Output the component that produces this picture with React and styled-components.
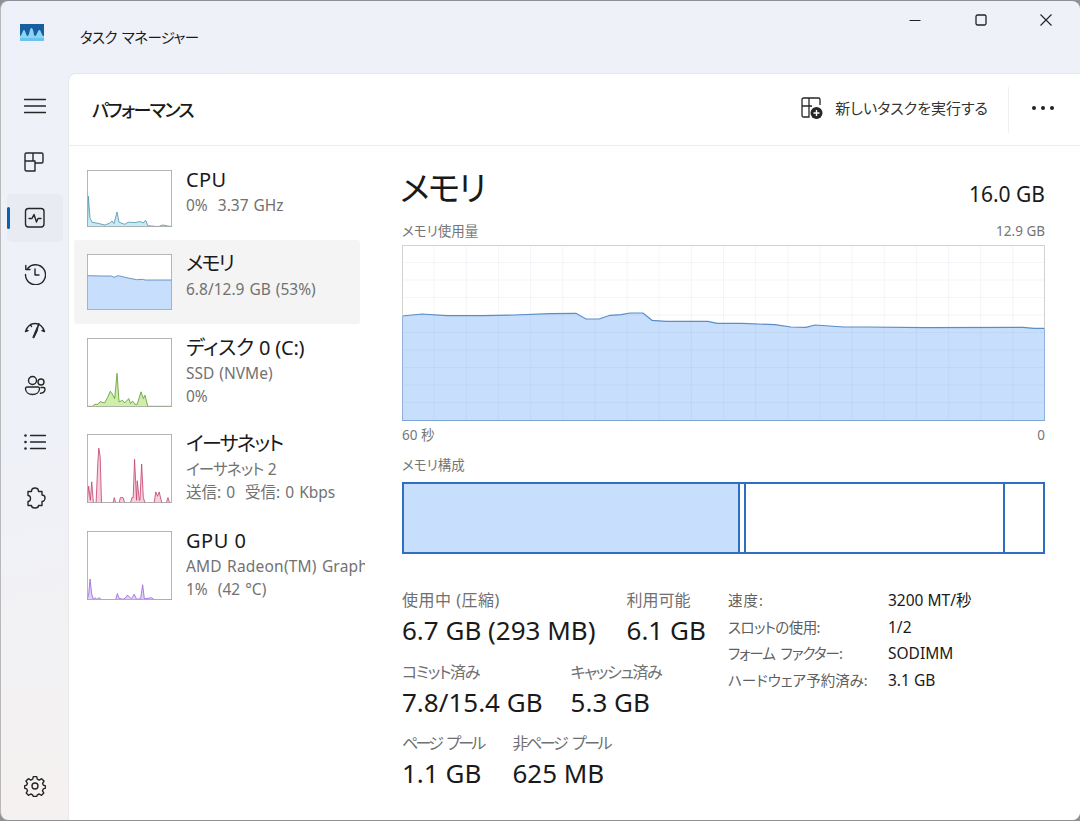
import React from "react";
import styled, { createGlobalStyle } from "styled-components";

const Global = createGlobalStyle`
  html, body { margin: 0; padding: 0; width: 1080px; height: 821px; overflow: hidden; background: #8f9196; }
  #root { width: 1080px; height: 821px; }
  * { box-sizing: border-box; }
`;

const Window = styled.div`
  width: 1080px; height: 819px;
  margin-top: 1px;
  border-left: 1px solid #b9b9bb;
  border-radius: 8px;
  overflow: hidden;
  display: flex; flex-direction: column;
  background: linear-gradient(170deg, #eef1f9 0%, #eff1f8 45%, #f8f1ec 100%);
  font-family: "Noto Sans", "Noto Sans CJK JP", sans-serif;
  font-feature-settings: "palt";
  color: #1a1a1a;
`;
const TitleBar = styled.div`
  height: 72px; flex: none;
  display: flex; align-items: flex-start;
  padding-left: 19px;
`;
const Logo = styled.svg`
  width: 24px; height: 17px; margin-top: 23px; flex: none;
`;
const AppName = styled.div`
  margin: 25px 0 0 36px;
  font-size: 14.5px; line-height: 22px; letter-spacing: -0.65px; word-spacing: 2px;
`;
const Controls = styled.div`
  margin-left: auto; display: flex; padding-right: 1px;
`;
const ControlBtn = styled.div`
  width: 65.5px; height: 38px; display: flex; align-items: center; justify-content: center;
`;
const Body = styled.div`
  flex: 1; display: flex; min-height: 0;
`;
const Nav = styled.nav`
  width: 67px; flex: none; display: flex; flex-direction: column;
  padding: 9px 0 10px 6px; gap: 8px;
`;
const NavItem = styled.div`
  position: relative;
  width: 56px; height: 48px; flex: none; border-radius: 5px;
  display: flex; align-items: center; justify-content: center;
  background: ${p => (p.$active ? "#e9ebf2" : "transparent")};
  ${p => p.$bottom && "margin-top: auto;"}
`;
const Indicator = styled.span`
  position: absolute; left: 0; top: 13px; width: 3px; height: 22px;
  border-radius: 2px; background: #0b62ab;
`;
const Main = styled.main`
  flex: 1; min-width: 0; display: flex; flex-direction: column;
  background: #fff;
  border-top-left-radius: 8px;
  border-top: 1px solid #e6e7ea;
  border-left: 1px solid #e9e9ea;
`;
const Header = styled.header`
  height: 72px; flex: none; display: flex; align-items: center;
  border-bottom: 1px solid #ececec;
  padding-left: 23px;
`;
const PageTitle = styled.h1`
  margin: 1px 0 0; font-size: 18px; font-weight: 500; line-height: 24px; letter-spacing: -1.5px;
`;
const NewTask = styled.div`
  margin-left: auto; display: flex; align-items: center; gap: 12px;
  font-size: 15px; color: #333; padding: 0 20px 4px 0;
`;
const Separator = styled.div`
  width: 1px; height: 46px; background: #f0f0f0;
`;
const More = styled.div`
  width: 71px; display: flex; justify-content: center; align-items: center;
  padding: 0 4px 4px 0;
`;
const Content = styled.div`
  flex: 1; display: flex; min-height: 0;
`;
const Side = styled.aside`
  width: 296px; flex: none; overflow: hidden; padding: 10px 5px 0 5px;
`;
const Row = styled.div`
  height: ${p => p.$h}px; display: flex; gap: 14px; padding: 14px 0 0 13px; border-radius: 3px;
  white-space: nowrap;
  background: ${p => (p.$active ? "#f4f4f4" : "transparent")};
`;
const Thumb = styled.svg`
  width: 85px; height: ${p => p.$h}px; flex: none; display: block;
`;
const RowText = styled.div`
  margin-top: -4px;
`;
const RowTitle = styled.div`
  font-size: 20px; line-height: 28px; color: #1a1a1a;
  letter-spacing: ${p => p.$track || 0}px;
`;
const RowSub = styled.div`
  font-size: 15.5px; line-height: 23px; color: #727272;
  letter-spacing: ${p => p.$track || 0}px;
  word-spacing: 1px;
  &:first-of-type { margin-top: 1px; }
`;
const Detail = styled.section`
  flex: 1; min-width: 0; padding: 17px 35px 0 37px; display: flex; flex-direction: column;
`;
const DetailHead = styled.div`
  display: flex; justify-content: space-between; align-items: flex-end; height: 50px;
`;
const BigTitle = styled.h2`
  margin: 0 0 0 -2px; font-size: 34px; font-weight: 400; line-height: 50px; letter-spacing: -1.8px;
`;
const Total = styled.div`
  font-size: 21px; line-height: 28px; margin-bottom: 5px;
`;
const Caption = styled.div`
  display: flex; justify-content: space-between;
  font-size: 13.5px; line-height: 20px; color: #767676;
`;
const ChartCaption = styled(Caption)`
  margin-top: 8px; margin-bottom: 4px;
`;
const AxisCaption = styled(Caption)`
  margin-top: 4px;
`;
const BarCaption = styled(Caption)`
  margin-top: 10px; margin-bottom: 7px;
`;
const Chart = styled.svg`
  width: 643px; height: 176px; display: block; flex: none;
`;
const Bar = styled.div`
  width: 643px; height: 72px; flex: none; display: flex;
  border: 2px solid #2e6fc2;
`;
const Seg = styled.div`
  width: ${p => p.$w}px; flex: ${p => (p.$grow ? 1 : "none")};
  background: ${p => (p.$fill ? "#c7defc" : "#fff")};
  ${p => p.$line && "border-right: 2px solid #2e6fc2;"}
`;
const Stats = styled.div`
  display: flex; margin-top: 35px;
`;
const StatsLeft = styled.div`
  width: 326px; flex: none; display: flex; flex-direction: column; gap: 12.5px;
`;
const StatRow = styled.div`
  display: flex; gap: ${p => p.$gap}px;
`;
const Stat = styled.div``;
const StatLabel = styled.div`
  font-size: 16px; line-height: 22px; color: #707070; white-space: nowrap;
  letter-spacing: ${p => p.$track || 0}px;
  word-spacing: ${p => p.$word || 0}px;
`;
const StatValue = styled.div`
  font-size: 26px; line-height: 36px; color: #1a1a1a; margin-top: 1px; white-space: nowrap;
`;
const Facts = styled.dl`
  margin: 0; display: grid; grid-template-columns: 160px auto; grid-auto-rows: 26.6px;
  align-content: start; line-height: 22px;
`;
const FactKey = styled.dt`
  color: #5f5f5f; font-size: 14.5px; white-space: nowrap;
  letter-spacing: ${p => p.$track || 0}px;
  word-spacing: ${p => p.$word || 0}px;
`;
const FactVal = styled.dd`
  margin: 0; color: #1a1a1a; font-size: 15.5px;
`;

const Ic = ({ children }) => (
  <svg width={22} height={22} viewBox="0 0 22 22" fill="none" stroke="#262626" strokeWidth="1.4" strokeLinecap="round" strokeLinejoin="round">
    {children}
  </svg>
);

const line = pts => pts.map(p => p.join(",")).join(" ");

function Spark({ box, pts, stroke, fill, h }) {
  const [x, y, w, ht] = box;
  const closed = [[x, y + ht], ...pts, [x + w, y + ht]];
  return (
    <Thumb $h={h} viewBox={`${x} ${y} ${w} ${ht}`} preserveAspectRatio="none">
      <rect x={x} y={y} width={w} height={ht} fill="#fff" />
      <polygon points={line(closed)} fill={fill} />
      <polyline points={line(pts)} fill="none" stroke={stroke} strokeWidth="2.4" />
      <rect x={x + 1} y={y + 1} width={w - 2} height={ht - 2} fill="none" stroke="#a9a9a9" strokeWidth="3" />
    </Thumb>
  );
}

const cpu = [[24,195],[27,105],[32,170],[38,182],[55,185],[75,190],[90,185],[97,178],[103,186],[112,152],[118,182],[135,188],[145,182],[165,183],[180,180],[190,184],[197,176],[203,192],[235,195],[248,190],[262,193],[275,195]];
const mem = [[23,348],[70,349],[95,349],[103,353],[115,348],[145,355],[170,360],[190,359],[195,361],[275,361]];
const disk = [[23,228],[40,228],[45,222],[55,222],[62,214],[75,218],[85,200],[92,183],[100,195],[105,205],[112,130],[118,215],[128,210],[135,218],[147,205],[152,220],[158,212],[165,222],[172,222],[183,185],[190,205],[195,195],[203,228],[275,228]];
const eth = [[23,518],[28,468],[33,510],[37,455],[42,518],[50,518],[55,400],[58,355],[62,380],[66,518],[100,518],[104,502],[108,518],[118,518],[122,502],[130,502],[135,518],[152,518],[156,502],[160,502],[164,388],[170,510],[172,452],[178,510],[180,510],[185,402],[190,502],[195,518],[222,518],[227,485],[232,498],[237,485],[245,518],[258,518],[263,502],[268,518],[275,518]];
const gpu = [[23,807],[28,790],[32,745],[37,790],[42,805],[47,800],[52,805],[60,800],[65,807],[108,807],[113,788],[118,802],[130,805],[138,800],[143,792],[150,800],[155,803],[163,790],[170,805],[182,803],[188,762],[193,803],[205,802],[213,800],[225,807],[275,807]];

const memMain = [[402,316],[422,314],[447,315.7],[483,315.7],[514,315],[550,313.7],[576,313.3],[586,319],[599,319],[610,315.3],[621,314.7],[630,313],[643,313],[652,320.3],[666,321.3],[708,321.3],[717,323.3],[742,323.3],[775,324.7],[791,327],[806,327.3],[815,325],[844,327],[867,327],[925,327.7],[1023,327.3],[1034,328.3],[1045,328.3]];

function MainChart() {
  const pts = memMain.map(([x, y]) => [x - 402, y - 245]);
  const v = Array.from({ length: 19 }, (_, i) => ((i + 1) * 643) / 20);
  const h = Array.from({ length: 9 }, (_, i) => ((i + 1) * 175) / 10);
  return (
    <Chart viewBox="0 0 643 176">
      <polygon points={line([[0, 175], ...pts, [643, 175]])} fill="#c7defc" />
      {v.map(x => <line key={x} x1={x} x2={x} y1="0" y2="175" stroke="#8aa0b8" strokeOpacity="0.1" />)}
      {h.map(y => <line key={y} x1="0" x2="643" y1={y} y2={y} stroke="#8aa0b8" strokeOpacity="0.1" />)}
      <polyline points={line(pts)} fill="none" stroke="#5b8dc9" strokeWidth="1.2" />
      <rect x="0.5" y="0.5" width="642" height="175" fill="none" stroke="#d2d2d2" />
      <line x1="0" x2="643" y1="175.5" y2="175.5" stroke="#7ea6d6" />
      <line x1="0.5" x2="0.5" y1={pts[0][1]} y2="175" stroke="#8fb0d8" />
      <line x1="642.5" x2="642.5" y1={pts[pts.length - 1][1]} y2="175" stroke="#8fb0d8" />
    </Chart>
  );
}

export default function App() {
  return (
    <>
      <Global />
      <Window>
        <TitleBar>
          <Logo viewBox="0 0 24 17">
            <rect width="24" height="17" fill="#8fd3f4" />
            <path d="M0 0H24V12C22 13 21 6 19.500 6C17.500 6 17 12 15 12C13.500 12 13.500 4 11.500 4C9.500 4 9.500 12 7.500 12C6 12 5.500 6 4 6C2.500 6 2 12 0 12Z" fill="#17609f" />
            <rect y="14" width="24" height="3" fill="#6cc2ee" />
          </Logo>
          <AppName>タスク マネージャー</AppName>
          <Controls>
            <ControlBtn>
              <svg width="12" height="12" viewBox="0 0 12 12"><line x1="0.500" x2="11.500" y1="6.500" y2="6.500" stroke="#222" strokeWidth="1.1" /></svg>
            </ControlBtn>
            <ControlBtn>
              <svg width="12" height="12" viewBox="0 0 12 12"><rect x="1" y="1" width="10" height="10" rx="1.500" fill="none" stroke="#222" strokeWidth="1.300" /></svg>
            </ControlBtn>
            <ControlBtn>
              <svg width="12" height="12" viewBox="0 0 12 12"><path d="M0.500 0.500L11.500 11.500M11.500 0.500L0.500 11.500" stroke="#222" strokeWidth="1.100" /></svg>
            </ControlBtn>
          </Controls>
        </TitleBar>
        <Body>
          <Nav>
            <NavItem><Ic><path d="M0.500 4.500H21.500M0.500 11H21.500M0.500 17.500H21.500" strokeWidth="1.300" /></Ic></NavItem>
            <NavItem>
              <Ic><path d="M1 10V3.500A1.500 1.500 0 0 1 2.500 2H9V10ZM1 10H11V20H2.500A1.500 1.500 0 0 1 1 18.500ZM9 2H17.500A1.500 1.500 0 0 1 19 3.500V10.500A1.500 1.500 0 0 1 17.500 12H11" /></Ic>
            </NavItem>
            <NavItem $active>
              <Indicator />
              <Ic><rect x="1.500" y="1.500" width="18.500" height="18.500" rx="3" /><path d="M5 11.500H8L10 7.500L12.500 15L14 11.500H17" /></Ic>
            </NavItem>
            <NavItem>
              <Ic><path d="M3.700 5.500A10 10 0 1 1 1.500 11.500" /><path d="M1.800 2.500V6.500H6M11 6V12H15" /></Ic>
            </NavItem>
            <NavItem>
              <Ic>
                <path d="M1.500 12.500C3 7.500 7 4.500 11 4.500C15 4.500 19 7.500 20.500 12.500M1.500 12.500L4 11.500M20.500 12.500L18 11.500M6.500 5.500L7.500 7.500" />
                <path d="M14.800 4.500L11.500 12L8.800 18.500L9.800 19L13 12.500Z" fill="#262626" strokeWidth="1" />
              </Ic>
            </NavItem>
            <NavItem>
              <Ic><circle cx="8.500" cy="5.500" r="4" /><circle cx="17" cy="7" r="3" /><path d="M1.500 13.500A1.500 1.500 0 0 1 3 12H14A1.500 1.500 0 0 1 15.500 13.500C15.500 17.500 12 19.500 8.500 19.500C5 19.500 1.500 17.500 1.500 13.500ZM17 12.500H19.500A1.500 1.500 0 0 1 21 14C21 16.500 19 18 16.500 18.300" /></Ic>
            </NavItem>
            <NavItem>
              <Ic><path d="M6.500 4.500H21.500M6.500 11H21.500M6.500 17.500H21.500" strokeWidth="1.300" /><circle cx="1.500" cy="4.500" r="0.600" fill="#262626" /><circle cx="1.500" cy="11" r="0.600" fill="#262626" /><circle cx="1.500" cy="17.500" r="0.600" fill="#262626" /></Ic>
            </NavItem>
            <NavItem>
              <Ic><path d="M7.500 4.500C7.500 2.500 9 1 11 1C13 1 14.500 2.500 14.500 4.500H18V8C20 8 21 9.500 21 11C21 13 19.500 14.500 18 14.500V18.500H14.500C14.500 20 13 21 11 21C9 21 7.500 20 7.500 18.500H4V14.500C5.500 14.500 6.500 13 6.500 11.500C6.500 10 5.500 8.500 4 8.500V4.500Z" /></Ic>
            </NavItem>
            <NavItem $bottom>
              <Ic>
                <circle cx="11" cy="11" r="3" />
                <path d="M9.300 1.600H12.700L13.300 4.200L15.300 5.100L17.600 3.700L20 6.100L18.600 8.400L19.400 10.200L21.500 11V13.200L19.300 13.900L18.500 15.800L19.800 18L17.500 20.300L15.200 19L13.400 19.800L12.700 21.400H9.300L8.600 19.800L6.800 19L4.500 20.300L2.200 18L3.500 15.800L2.700 13.900L0.500 13.200V11L2.600 10.200L3.400 8.400L2 6.100L4.400 3.700L6.700 5.100L8.700 4.200Z" />
              </Ic>
            </NavItem>
          </Nav>
          <Main>
            <Header>
              <PageTitle>パフォーマンス</PageTitle>
              <NewTask>
                <svg width="22" height="22" viewBox="0 0 22 22" fill="none" stroke="#262626" strokeWidth="1.300">
                  <path d="M1 9V2.500A1.500 1.500 0 0 1 2.500 1H8V9ZM1 9H8V20H2.500A1.500 1.500 0 0 1 1 18.500ZM8 1H17.500A1.500 1.500 0 0 1 19 2.500V8M8 9H11" />
                  <circle cx="15.500" cy="16" r="6" fill="#262626" stroke="none" />
                  <path d="M15.500 13V19M12.500 16H18.500" stroke="#fff" strokeWidth="1.400" />
                </svg>
                新しいタスクを実行する
              </NewTask>
              <Separator />
              <More>
                <svg width="22" height="4" viewBox="0 0 22 4"><circle cx="2" cy="2" r="2" fill="#222" /><circle cx="11" cy="2" r="2" fill="#222" /><circle cx="20" cy="2" r="2" fill="#222" /></svg>
              </More>
            </Header>
            <Content>
              <Side>
                <Row $h={84}>
                  <Spark h={57} box={[23, 28, 252, 168]} pts={cpu} stroke="#4f95a8" fill="#c6ebf5" />
                  <RowText><RowTitle $track={0.4}>CPU</RowTitle><RowSub>0%&nbsp; 3.37 GHz</RowSub></RowText>
                </Row>
                <Row $h={84} $active>
                  <Spark h={56} box={[23, 283, 252, 168]} pts={mem} stroke="#4f80b8" fill="#c7defc" />
                  <RowText><RowTitle $track={-2}>メモリ</RowTitle><RowSub>6.8/12.9 GB (53%)</RowSub></RowText>
                </Row>
                <Row $h={96}>
                  <Spark h={69} box={[23, 25, 252, 205]} pts={disk} stroke="#5f9c2e" fill="#cfeeae" />
                  <RowText><RowTitle $track={-0.2}>ディスク 0 (C:)</RowTitle><RowSub>SSD (NVMe)</RowSub><RowSub>0%</RowSub></RowText>
                </Row>
                <Row $h={97}>
                  <Spark h={69} box={[23, 313, 252, 205]} pts={eth} stroke="#c4426f" fill="#f7d0dd" />
                  <RowText><RowTitle $track={-1.6}>イーサネット</RowTitle><RowSub $track={-0.8}>イーサネット 2</RowSub><RowSub>送信: 0&nbsp; 受信: 0 Kbps</RowSub></RowText>
                </Row>
                <Row $h={96}>
                  <Spark h={69} box={[23, 603, 252, 204]} pts={gpu} stroke="#9a66d8" fill="#e1d0f8" />
                  <RowText><RowTitle $track={0.5}>GPU 0</RowTitle><RowSub $track={0.2}>AMD Radeon(TM) Graphics</RowSub><RowSub>1%&nbsp; (42 °C)</RowSub></RowText>
                </Row>
              </Side>
              <Detail>
                <DetailHead>
                  <BigTitle>メモリ</BigTitle>
                  <Total>16.0 GB</Total>
                </DetailHead>
                <ChartCaption><span>メモリ使用量</span><span>12.9 GB</span></ChartCaption>
                <MainChart />
                <AxisCaption><span>60 秒</span><span>0</span></AxisCaption>
                <BarCaption><span>メモリ構成</span></BarCaption>
                <Bar>
                  <Seg $w={336} $fill $line />
                  <Seg $w={6} $line />
                  <Seg $w={259} $line />
                  <Seg $grow />
                </Bar>
                <Stats>
                  <StatsLeft>
                    <StatRow $gap={31}>
                      <Stat><StatLabel $track={0.5}>使用中 (圧縮)</StatLabel><StatValue>6.7 GB (293 MB)</StatValue></Stat>
                      <Stat><StatLabel>利用可能</StatLabel><StatValue>6.1 GB</StatValue></Stat>
                    </StatRow>
                    <StatRow $gap={28}>
                      <Stat><StatLabel $track={-1.3}>コミット済み</StatLabel><StatValue>7.8/15.4 GB</StatValue></Stat>
                      <Stat><StatLabel $track={-1.4}>キャッシュ済み</StatLabel><StatValue>5.3 GB</StatValue></Stat>
                    </StatRow>
                    <StatRow $gap={29}>
                      <Stat><StatLabel $track={-2.8} $word={4}>ページ プール</StatLabel><StatValue>1.1 GB</StatValue></Stat>
                      <Stat><StatLabel $track={-2.4} $word={4}>非ページ プール</StatLabel><StatValue>625 MB</StatValue></Stat>
                    </StatRow>
                  </StatsLeft>
                  <Facts>
                    <FactKey $track={1}>速度:</FactKey><FactVal>3200 MT/秒</FactVal>
                    <FactKey $track={-0.6}>スロットの使用:</FactKey><FactVal>1/2</FactVal>
                    <FactKey $track={-1} $word={3}>フォーム ファクター:</FactKey><FactVal>SODIMM</FactVal>
                    <FactKey>ハードウェア予約済み:</FactKey><FactVal>3.1 GB</FactVal>
                  </Facts>
                </Stats>
              </Detail>
            </Content>
          </Main>
        </Body>
      </Window>
    </>
  );
}
